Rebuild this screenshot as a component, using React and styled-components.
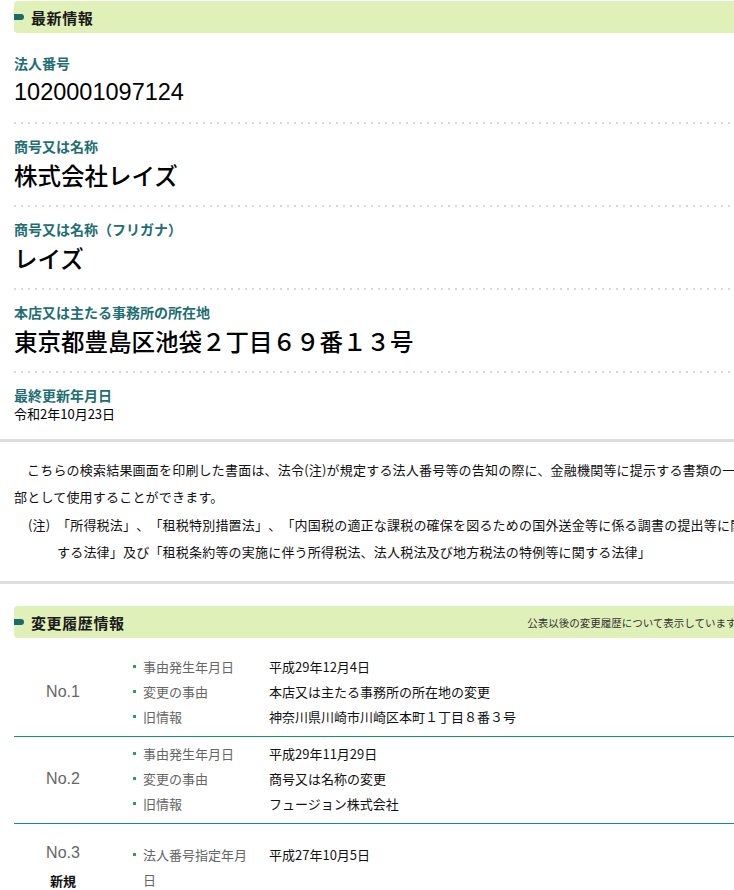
import React from 'react';
import styled, { createGlobalStyle } from 'styled-components';

const JP = `"Noto Sans CJK JP", "Noto Sans", sans-serif`;
const LATIN = `"Liberation Sans", Arial, sans-serif`;

const GlobalStyle = createGlobalStyle`
  html, body {
    margin: 0;
    overflow: hidden;
    background: #fff;
  }
  body {
    font-family: ${JP};
    color: #111;
    text-spacing-trim: space-all;
  }
`;

const Page = styled.div`
  width: 760px;
  padding-top: 1px;
`;

const Section = styled.section`
  padding: 0 14px;
  margin-top: ${p => p.$mt || 0}px;
`;

const HeadBar = styled.div`
  display: flex;
  align-items: center;
  height: 32px;
  background: #e0f0b9;
  border-radius: 4px;
`;

const HeadMark = styled.span`
  flex: none;
  width: 10px;
  height: 6px;
  margin-right: 7px;
  background: #1b6b6b;
  border-radius: 0 3px 3px 0;
`;

const HeadTitle = styled.h2`
  margin: 0;
  font-size: 15px;
  font-weight: 700;
  letter-spacing: 0.6px;
  line-height: 1;
  color: #1a1a1a;
`;

const HeadNote = styled.span`
  margin-left: auto;
  font-size: 10.5px;
  color: #333;
  white-space: nowrap;
`;

const InfoList = styled.dl`
  margin: 8px 0 0;
  padding-bottom: 2px;
`;

const InfoItem = styled.div`
  padding: 12px 0 14px;
  &:not(:last-child) {
    padding-bottom: 16px;
    background: linear-gradient(to right, #d8d8d8 2px, transparent 2px) left bottom / 7px 2px repeat-x;
  }
`;

const InfoLabel = styled.dt`
  margin: 0;
  font-size: 14px;
  font-weight: 700;
  line-height: 20px;
  color: #1e6e73;
`;

const InfoValue = styled.dd`
  margin: ${p => (p.$small ? 0 : 3)}px 0 0;
  font-family: ${p => (p.$num ? LATIN : JP)};
  font-size: ${p => (p.$small ? 13 : 23.5)}px;
  font-weight: ${p => (p.$small ? 400 : 500)};
  line-height: ${p => (p.$small ? 18 : 32)}px;
  color: #000;
`;

const Divider = styled.hr`
  margin: 0;
  border: 0;
  height: 3px;
  background: #ddd;
`;

const Notice = styled.div`
  padding: 14px 15px 16px 14px;
  font-size: 13px;
  letter-spacing: 0.2px;
  line-height: 27px;
  color: #111;
`;

const Lead = styled.p`
  margin: 0;
  text-indent: 1em;
`;

const Note = styled.dl`
  display: grid;
  grid-template-columns: 29px 1fr;
  margin: 1px 0 0 14px;
  dt, dd { margin: 0; }
`;

const HistoryList = styled.div`
  margin-top: 12px;
`;

const HistoryRow = styled.div`
  display: grid;
  grid-template-columns: 98px 1fr;
  align-items: center;
  padding: ${p => (p.$isNew ? 18 : 4)}px 0 7px;
  border-bottom: 1px solid #1a9160;
  &:last-child { border-bottom: 0; }
`;

const NoCell = styled.div`
  text-align: center;
`;

const NoText = styled.div`
  font-family: ${LATIN};
  font-size: 16px;
  line-height: 19px;
  color: #666;
`;

const NewBadge = styled.div`
  margin-top: 8.5px;
  font-size: 13px;
  font-weight: 700;
  line-height: 20px;
  color: #111;
`;

const Facts = styled.ul`
  list-style: none;
  margin: 0;
  padding: 0;
`;

const Fact = styled.li`
  display: grid;
  grid-template-columns: 143px 1fr;
  column-gap: 14px;
  font-size: 13px;
  line-height: 25px;
`;

const FactLabel = styled.span`
  display: flex;
  padding-left: 21px;
  color: #666;
  &::before {
    content: "";
    flex: none;
    width: 3px;
    height: 3px;
    margin: 11px 7px 0 0;
    background: #2a9d6a;
  }
`;

const FactValue = styled.span`
  color: #111;
`;

const latest = [
  { label: '法人番号', value: '1020001097124', num: true },
  { label: '商号又は名称', value: '株式会社レイズ' },
  { label: '商号又は名称（フリガナ）', value: 'レイズ' },
  { label: '本店又は主たる事務所の所在地', value: '東京都豊島区池袋２丁目６９番１３号' },
  { label: '最終更新年月日', value: '令和2年10月23日', small: true },
];

const history = [
  {
    no: 'No.1',
    facts: [
      ['事由発生年月日', '平成29年12月4日'],
      ['変更の事由', '本店又は主たる事務所の所在地の変更'],
      ['旧情報', '神奈川県川崎市川崎区本町１丁目８番３号'],
    ],
  },
  {
    no: 'No.2',
    facts: [
      ['事由発生年月日', '平成29年11月29日'],
      ['変更の事由', '商号又は名称の変更'],
      ['旧情報', 'フュージョン株式会社'],
    ],
  },
  {
    no: 'No.3',
    isNew: true,
    facts: [['法人番号指定年月日', '平成27年10月5日']],
  },
];

const SectionHead = ({ title, note }) => (
  <HeadBar>
    <HeadMark />
    <HeadTitle>{title}</HeadTitle>
    {note && <HeadNote>{note}</HeadNote>}
  </HeadBar>
);

const App = () => {
  return (
    <Page>
      <GlobalStyle />
      <Section>
        <SectionHead title="最新情報" />
        <InfoList>
          {latest.map(item => (
            <InfoItem key={item.label}>
              <InfoLabel>{item.label}</InfoLabel>
              <InfoValue $num={item.num} $small={item.small}>{item.value}</InfoValue>
            </InfoItem>
          ))}
        </InfoList>
      </Section>
      <Divider />
      <Notice>
        <Lead>
          こちらの検索結果画面を印刷した書面は、法令(注)が規定する法人番号等の告知の際に、金融機関等に提示する書類の一部として使用することができます。
        </Lead>
        <Note>
          <dt>(注)</dt>
          <dd>
            「所得税法」、「租税特別措置法」、「内国税の適正な課税の確保を図るための国外送金等に係る調書の提出等に関する法律」及び「租税条約等の実施に伴う所得税法、法人税法及び地方税法の特例等に関する法律」
          </dd>
        </Note>
      </Notice>
      <Divider />
      <Section $mt={22}>
        <SectionHead title="変更履歴情報" note="公表以後の変更履歴について表示しています。" />
        <HistoryList>
          {history.map(row => (
            <HistoryRow key={row.no} $isNew={row.isNew}>
              <NoCell>
                <NoText>{row.no}</NoText>
                {row.isNew && <NewBadge>新規</NewBadge>}
              </NoCell>
              <Facts>
                {row.facts.map(([label, value]) => (
                  <Fact key={label}>
                    <FactLabel>{label}</FactLabel>
                    <FactValue>{value}</FactValue>
                  </Fact>
                ))}
              </Facts>
            </HistoryRow>
          ))}
        </HistoryList>
      </Section>
    </Page>
  );
};

export default App;
